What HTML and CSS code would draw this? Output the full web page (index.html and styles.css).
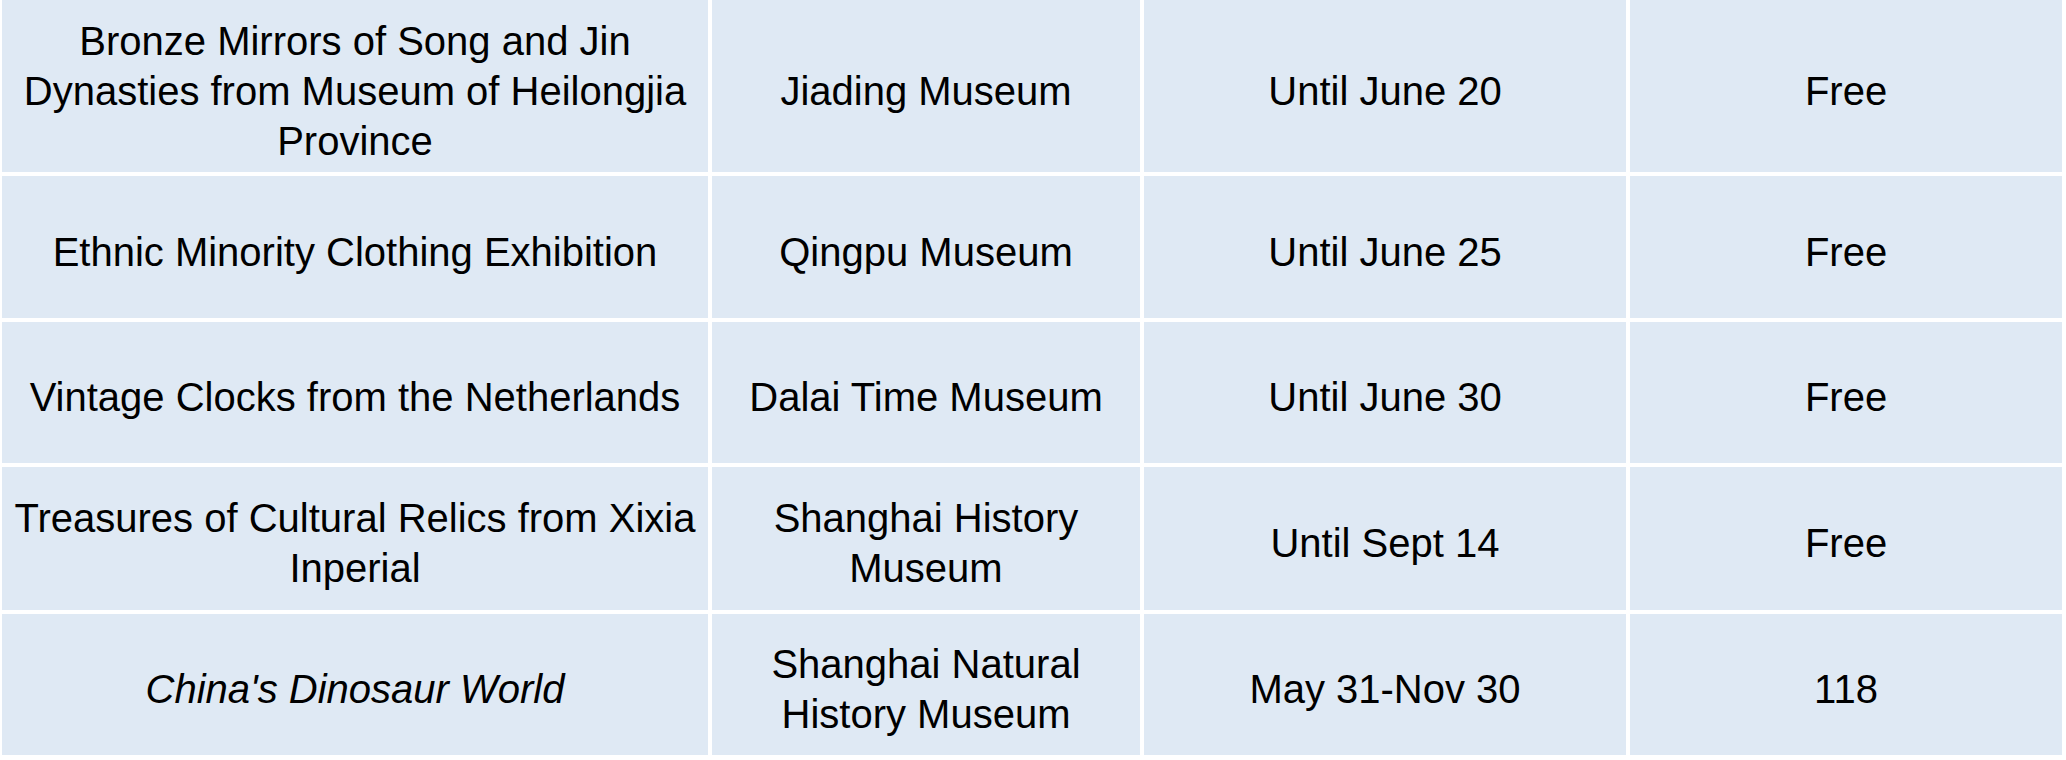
FILE: index.html
```html
<!DOCTYPE html>
<html lang="en">
<head>
<meta charset="utf-8">
<title>Exhibitions</title>
<link rel="stylesheet" href="styles.css">
</head>
<body>
<div class="table">
  <div class="cell r1">Bronze Mirrors of Song and Jin Dynasties from Museum of Heilongjia Province</div>
  <div class="cell r1">Jiading Museum</div>
  <div class="cell r1">Until June 20</div>
  <div class="cell r1">Free</div>

  <div class="cell">Ethnic Minority Clothing Exhibition</div>
  <div class="cell">Qingpu Museum</div>
  <div class="cell">Until June 25</div>
  <div class="cell">Free</div>

  <div class="cell">Vintage Clocks from the Netherlands</div>
  <div class="cell">Dalai Time Museum</div>
  <div class="cell">Until June 30</div>
  <div class="cell">Free</div>

  <div class="cell">Treasures of Cultural Relics from Xixia Inperial</div>
  <div class="cell">Shanghai History Museum</div>
  <div class="cell">Until Sept 14</div>
  <div class="cell">Free</div>

  <div class="cell italic">China's Dinosaur World</div>
  <div class="cell">Shanghai Natural History Museum</div>
  <div class="cell">May 31-Nov 30</div>
  <div class="cell">118</div>
</div>
</body>
</html>
```

FILE: styles.css
```css
html, body {
  margin: 0;
  padding: 0;
  background: #ffffff;
}

.table {
  display: grid;
  grid-template-columns: 706px 428px 482px 432px;
  grid-template-rows: 172px 142px 141px 143px 141px;
  gap: 4px;
  padding-left: 2px;
  font-family: "Liberation Sans", Arial, sans-serif;
  font-size: 40px;
  line-height: 50px;
  color: #000000;
}

.cell {
  background: #dfe9f4;
  display: flex;
  align-items: center;
  justify-content: center;
  text-align: center;
  padding: 9px 6px 0;
}

.italic {
  font-style: italic;
}
```
